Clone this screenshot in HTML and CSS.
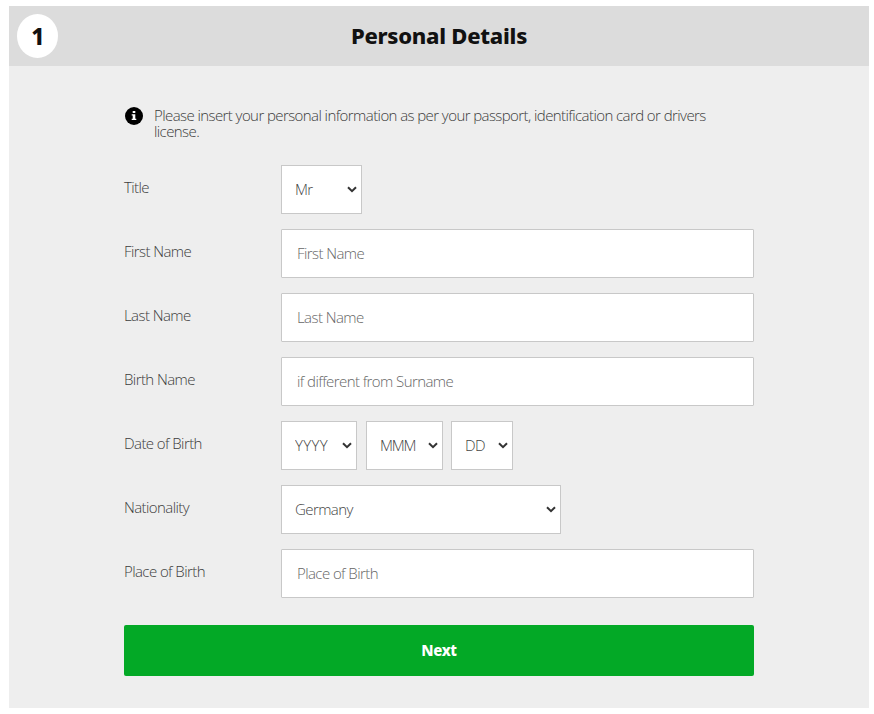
FILE: index.html
```html
<!DOCTYPE html>
<html lang="en">
<head>
    <meta charset="UTF-8">
    <meta name="viewport" content="width=device-width, initial-scale=1.0">
    <title>Personal Details</title>
    <link rel="stylesheet" href="styles.css">
</head>
<body>
    <div class="panel">
        <div class="panel-header">
            <span class="step">1</span>
            <h2>Personal Details</h2>
        </div>

        <form class="details-form">
            <div class="info">
                <svg class="info-icon" viewBox="0 0 18 18">
                    <circle cx="9" cy="9" r="9" fill="#000"/>
                    <path d="M7.7 4h2.6v2H7.7zM6.7 7.2h3.6v4.6h1V13H6.7v-1.2h1V8.4h-1z" fill="#fff"/>
                </svg>
                <p>Please insert your personal information as per your passport, identification card or drivers license.</p>
            </div>

            <div class="row">
                <label for="title">Title</label>
                <select id="title" class="w-title"><option>Mr</option><option>Mrs</option></select>
            </div>
            <div class="row">
                <label for="firstName">First Name</label>
                <input type="text" id="firstName" placeholder="First Name">
            </div>
            <div class="row">
                <label for="lastName">Last Name</label>
                <input type="text" id="lastName" placeholder="Last Name">
            </div>
            <div class="row">
                <label for="birthName">Birth Name</label>
                <input type="text" id="birthName" placeholder="if different from Surname">
            </div>
            <div class="row">
                <label for="year">Date of Birth</label>
                <div class="date">
                    <select id="year" class="w-year"><option>YYYY</option></select>
                    <select id="month" class="w-month"><option>MMM</option></select>
                    <select id="day" class="w-day"><option>DD</option></select>
                </div>
            </div>
            <div class="row">
                <label for="nationality">Nationality</label>
                <select id="nationality" class="w-nation"><option>Germany</option></select>
            </div>
            <div class="row">
                <label for="birthPlace">Place of Birth</label>
                <input type="text" id="birthPlace" placeholder="Place of Birth">
            </div>

            <button type="button">Next</button>
        </form>
    </div>
</body>
</html>
```
FILE: styles.css
```css
* {
    box-sizing: border-box;
}

body {
    margin: 0;
    padding: 6px 5px 6px 9px;
    background: #fff;
    color: #3c3c3c;
    font-family: "Open Sans", sans-serif;
    font-size: 15px;
    font-weight: 300;
    letter-spacing: -0.58px;
}

.panel {
    height: 702px;
    background: #eee;
}

.panel-header {
    display: grid;
    grid-template-columns: 41px 1fr 41px;
    align-items: center;
    height: 60px;
    padding: 0 8px;
    background: #dcdcdc;
    color: #111;
    font-family: "Noto Sans", sans-serif;
}

.step {
    width: 41px;
    height: 44px;
    border-radius: 50%;
    background: #fff;
    font-size: 23px;
    font-weight: 800;
    line-height: 44px;
    text-align: center;
}

h2 {
    margin: 0 0 2px;
    font-size: 22px;
    font-weight: 800;
    line-height: 30px;
    letter-spacing: -0.25px;
    text-align: center;
}

.details-form {
    width: 630px;
    margin-left: 115px;
    padding-top: 41px;
}

.info {
    display: flex;
    height: 58px;
}

.info-icon {
    width: 18px;
    height: 18px;
    margin: 0 11px 0 1px;
    flex: none;
}

.info p {
    width: 570px;
    margin: 0;
    line-height: 16px;
}

.row {
    display: flex;
    height: 49px;
    margin-bottom: 15px;
}

label {
    width: 157px;
    padding-top: 12px;
    line-height: 20px;
    flex: none;
}

input, select {
    height: 49px;
    border: 1px solid #c8c8c8;
    border-radius: 1px;
    background: #fff;
    color: #444;
    font: inherit;
    letter-spacing: inherit;
}

input {
    width: 473px;
    padding: 0 15px 1px;
}

input::placeholder {
    color: #666;
}

select {
    appearance: none;
    padding: 0 16px 1px 13px;
    border-radius: 0;
    background: #fff url("data:image/svg+xml,%3Csvg xmlns='http://www.w3.org/2000/svg' width='10' height='7' viewBox='0 0 10 7'%3E%3Cpath d='M1 1.2l4 4 4-4' fill='none' stroke='%23333' stroke-width='2'/%3E%3C/svg%3E") no-repeat right 4px top 20px;
}

.w-title {
    width: 81px;
}

.date {
    display: flex;
}

.w-year {
    width: 76px;
    margin-right: 9px;
    letter-spacing: 0.3px;
}

.w-month {
    width: 77px;
    margin-right: 8px;
    letter-spacing: -1.2px;
}

.w-day {
    width: 62px;
}

.w-nation {
    width: 280px;
}

button {
    display: block;
    width: 630px;
    height: 51px;
    margin-top: 27px;
    padding: 0 0 1px;
    border: none;
    border-radius: 2px;
    background: #03a926;
    color: #fff;
    font-family: "Noto Sans", sans-serif;
    font-size: 15px;
    font-weight: 800;
    letter-spacing: -0.4px;
}
```
